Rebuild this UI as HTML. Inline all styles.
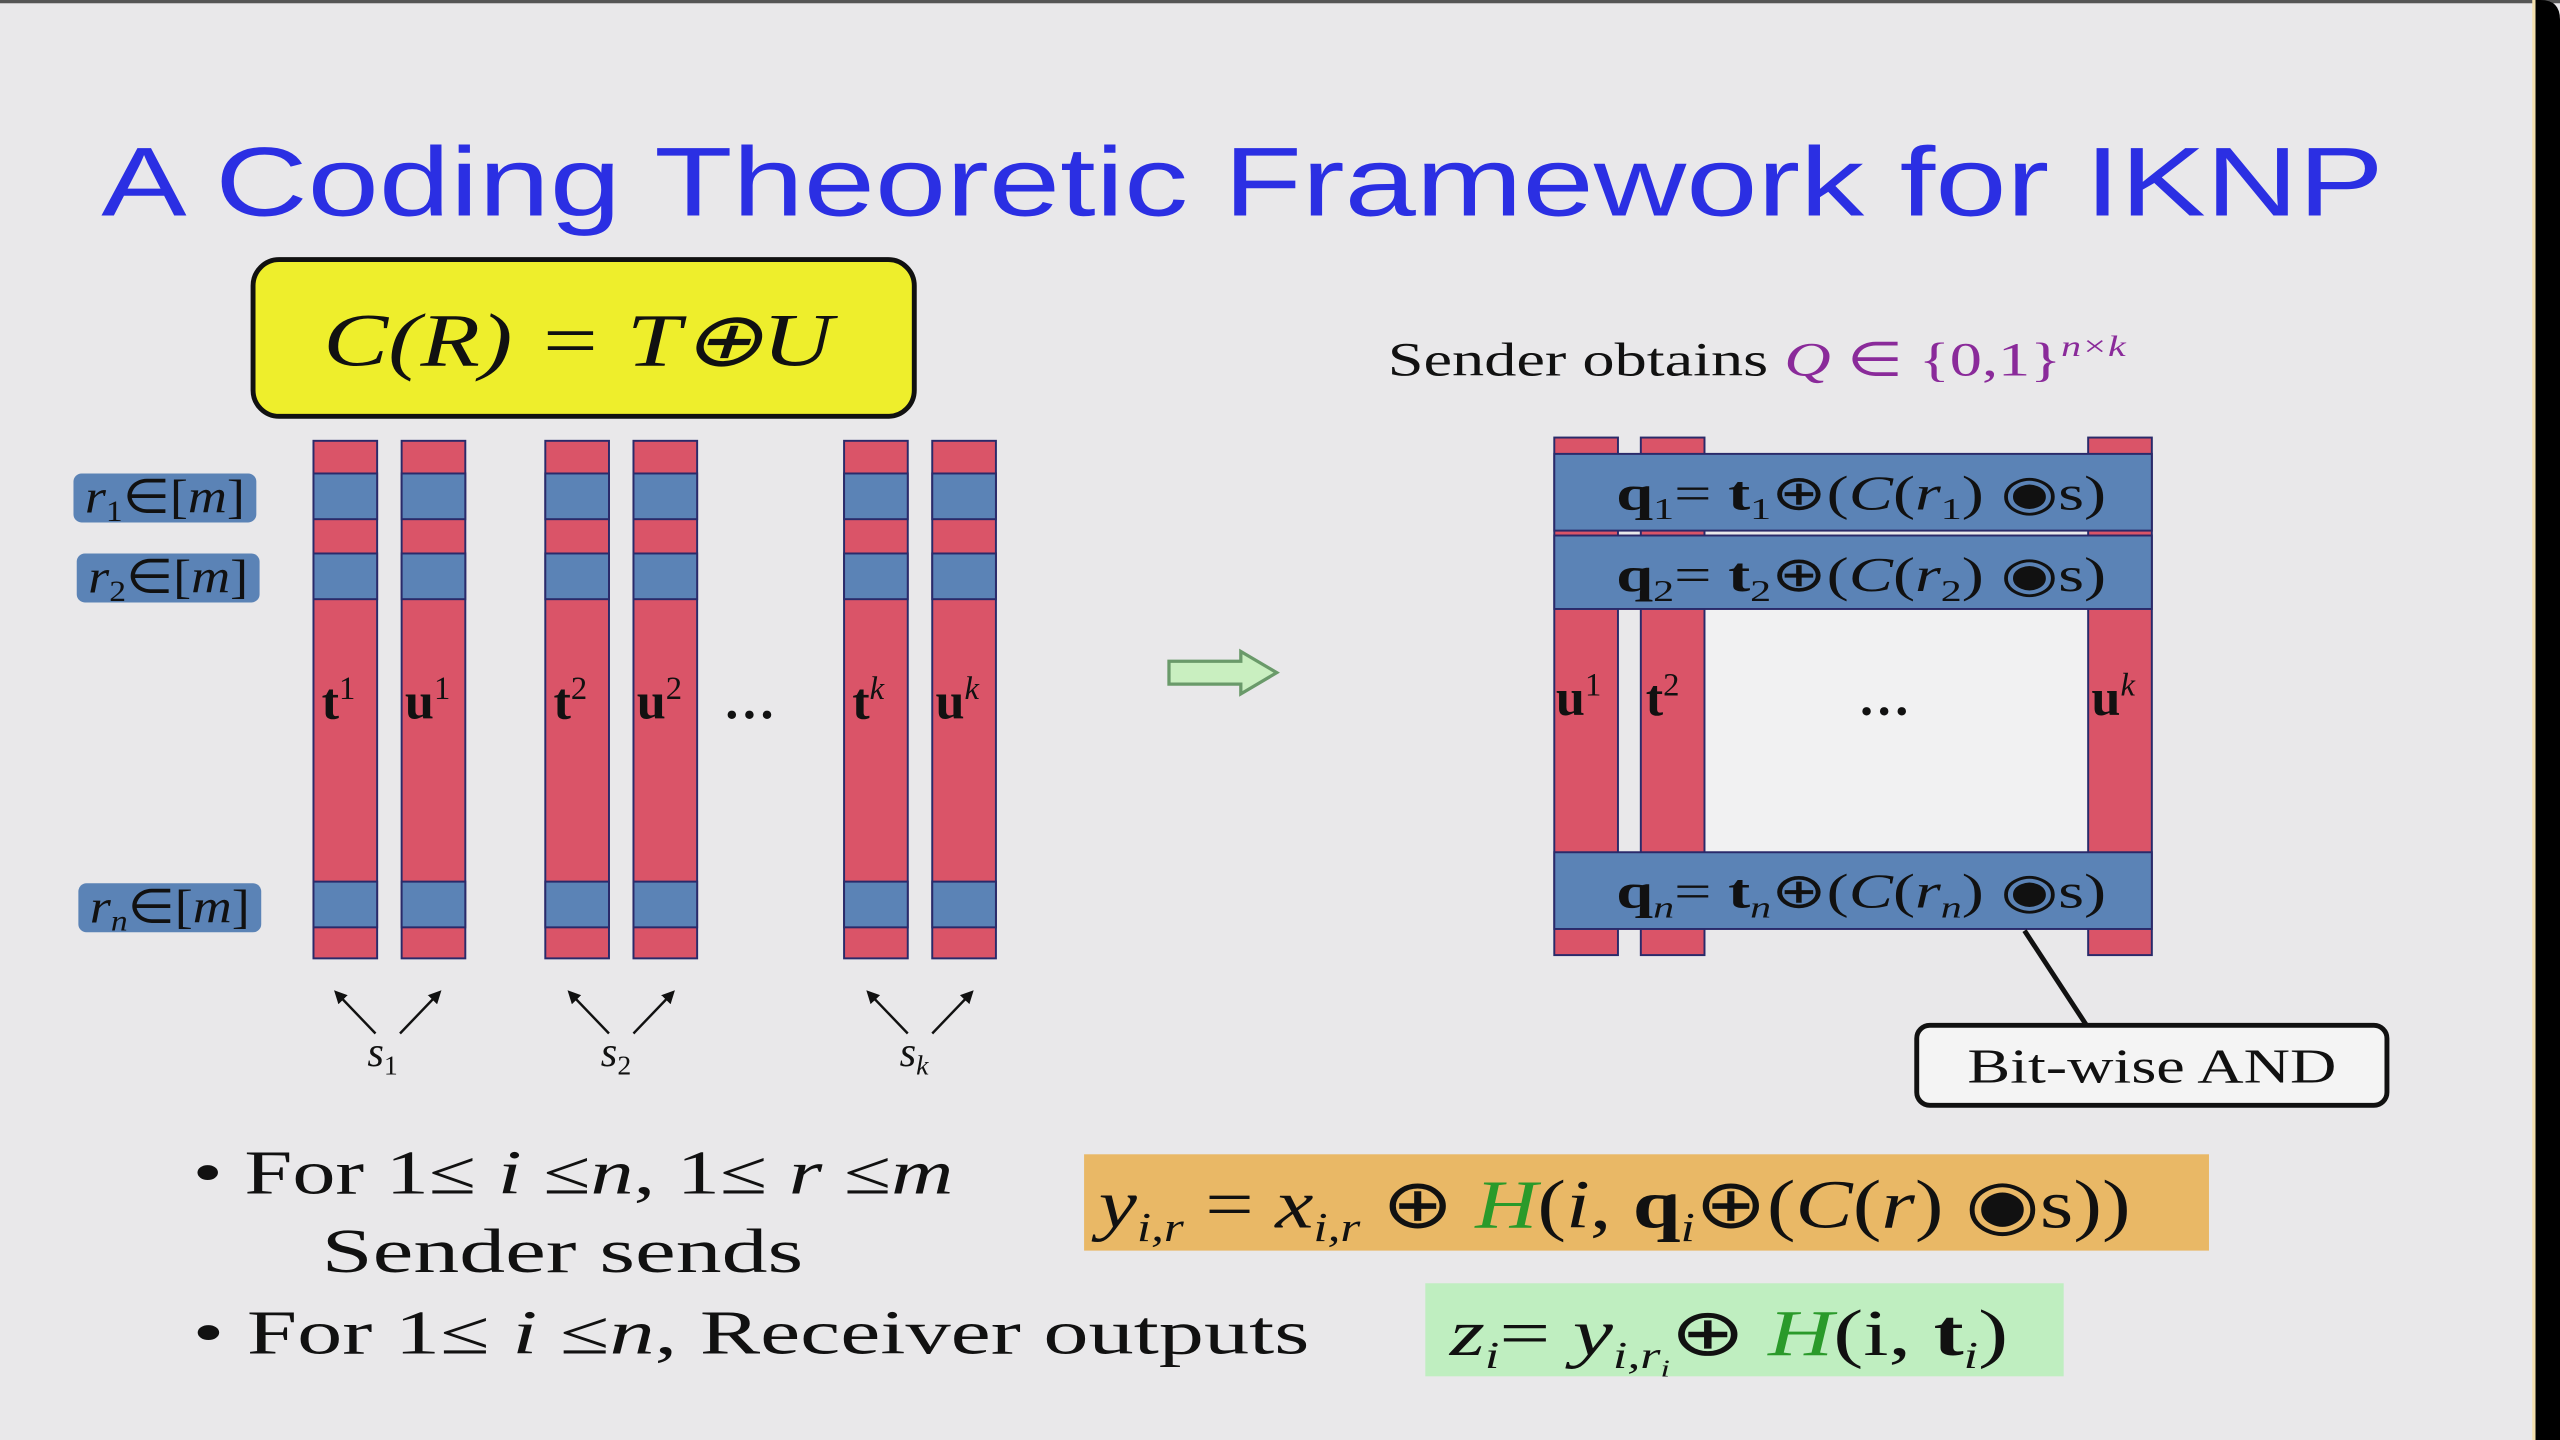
<!DOCTYPE html>
<html><head><meta charset="utf-8"><style>
html,body{margin:0;padding:0;background:#e9e8ea;}
svg{display:block;}
</style></head><body>
<svg width="2560" height="1440" viewBox="0 0 1568 882" xmlns="http://www.w3.org/2000/svg">
<defs>
<marker id="ah" markerWidth="8" markerHeight="8" refX="6" refY="4" orient="auto" markerUnits="userSpaceOnUse"><path d="M0,0 L8,4 L0,8 Z" fill="#111"/></marker>
<g id="col" stroke="#2a2a6a" stroke-width="1.2">
<rect x="0" y="270" width="39" height="317" fill="#da5468"/>
<rect x="0" y="290" width="39" height="28" fill="#5b83b6"/>
<rect x="0" y="339" width="39" height="28" fill="#5b83b6"/>
<rect x="0" y="540" width="39" height="28" fill="#5b83b6"/>
</g>
</defs>
<rect x="0" y="0" width="1568" height="882" fill="#e9e8ea"/>
<rect x="0" y="0" width="1568" height="2" fill="#555"/>
<rect x="1551" y="0" width="2" height="882" fill="#f2dfae"/>
<path d="M1553,0 H1556 Q1568,0 1568,12 V882 H1553 Z" fill="#000"/>

<text x="62" y="132" font-family="Liberation Sans, sans-serif" font-size="60" fill="#2b2fe3" textLength="1398" lengthAdjust="spacingAndGlyphs">A Coding Theoretic Framework for IKNP</text>

<rect x="155" y="159" width="405" height="96" rx="16" fill="#eeee2c" stroke="#111" stroke-width="3"/>
<text x="198" y="224" font-family="Liberation Serif, serif" font-style="italic" font-size="46" fill="#111" textLength="312" lengthAdjust="spacingAndGlyphs">C(R) = T⊕U</text>

<g font-family="Liberation Serif, serif" font-size="29" font-style="italic" fill="#111">
<rect x="45" y="290" width="112" height="30" rx="5" fill="#5b83b6"/>
<text x="52" y="314" textLength="98" lengthAdjust="spacingAndGlyphs">r<tspan font-size="18" dy="5" font-style="normal">1</tspan><tspan dy="-5" font-style="normal">∈[</tspan>m<tspan font-style="normal">]</tspan></text>
<rect x="47" y="339" width="112" height="30" rx="5" fill="#5b83b6"/>
<text x="54" y="363" textLength="98" lengthAdjust="spacingAndGlyphs">r<tspan font-size="18" dy="5" font-style="normal">2</tspan><tspan dy="-5" font-style="normal">∈[</tspan>m<tspan font-style="normal">]</tspan></text>
<rect x="48" y="541" width="112" height="30" rx="5" fill="#5b83b6"/>
<text x="55" y="565" textLength="98" lengthAdjust="spacingAndGlyphs">r<tspan font-size="18" dy="5">n</tspan><tspan dy="-5" font-style="normal">∈[</tspan>m<tspan font-style="normal">]</tspan></text>
</g>

<use href="#col" x="192"/><use href="#col" x="246"/><use href="#col" x="334"/><use href="#col" x="388"/><use href="#col" x="517"/><use href="#col" x="571"/>

<g font-family="Liberation Serif, serif" font-weight="bold" font-size="32" fill="#111">
<text x="197" y="440">t<tspan font-size="20" font-weight="normal" dy="-12">1</tspan></text>
<text x="248" y="440">u<tspan font-size="20" font-weight="normal" dy="-12">1</tspan></text>
<text x="339" y="440">t<tspan font-size="20" font-weight="normal" dy="-12">2</tspan></text>
<text x="390" y="440">u<tspan font-size="20" font-weight="normal" dy="-12">2</tspan></text>
<text x="443" y="440">…</text>
<text x="522" y="440">t<tspan font-size="20" font-weight="normal" font-style="italic" dy="-12">k</tspan></text>
<text x="573" y="440">u<tspan font-size="20" font-weight="normal" font-style="italic" dy="-12">k</tspan></text>
</g>

<g stroke="#111" stroke-width="1.5" fill="none" marker-end="url(#ah)">
<line x1="230" y1="633" x2="206" y2="608"/><line x1="245" y1="633" x2="269" y2="608"/>
<line x1="373" y1="633" x2="349" y2="608"/><line x1="388" y1="633" x2="412" y2="608"/>
<line x1="556" y1="633" x2="532" y2="608"/><line x1="571" y1="633" x2="595" y2="608"/>
</g>
<g font-family="Liberation Serif, serif" font-style="italic" font-size="26" fill="#111">
<text x="225" y="653">s<tspan font-size="17" font-style="normal" dy="5">1</tspan></text>
<text x="368" y="653">s<tspan font-size="17" font-style="normal" dy="5">2</tspan></text>
<text x="551" y="653">s<tspan font-size="17" dy="5">k</tspan></text>
</g>

<path d="M716,405 H760 V399 L782,412 L760,425 V419 H716 Z" fill="#c9efc0" stroke="#6a9a6a" stroke-width="2"/>

<text x="850" y="230" font-family="Liberation Serif, serif" font-size="29" fill="#111" textLength="452" lengthAdjust="spacingAndGlyphs">Sender obtains <tspan fill="#8a2a9a"><tspan font-style="italic">Q</tspan> ∈ {0,1}<tspan font-size="18" font-style="italic" dy="-12">n×k</tspan></tspan></text>

<rect x="1044" y="373" width="235" height="149" fill="#f1f1f2"/>
<g stroke="#2a2a6a" stroke-width="1.2">
<rect x="952" y="268" width="39" height="317" fill="#da5468"/>
<rect x="1005" y="268" width="39" height="317" fill="#da5468"/>
<rect x="1279" y="268" width="39" height="317" fill="#da5468"/>
<rect x="952" y="278" width="366" height="47" fill="#5b83b6"/>
<rect x="952" y="328" width="366" height="45" fill="#5b83b6"/>
<rect x="952" y="522" width="366" height="47" fill="#5b83b6"/>
</g>
<g font-family="Liberation Serif, serif" font-size="30" fill="#111">
<text x="990" y="312" textLength="300" lengthAdjust="spacingAndGlyphs"><tspan font-weight="bold">q</tspan><tspan font-size="19" dy="6">1</tspan><tspan dy="-6">= </tspan><tspan font-weight="bold">t</tspan><tspan font-size="19" dy="6">1</tspan><tspan dy="-6">⊕(</tspan><tspan font-style="italic">C</tspan>(<tspan font-style="italic">r</tspan><tspan font-size="19" dy="6">1</tspan><tspan dy="-6">) ◉s)</tspan></text>
<text x="990" y="362" textLength="300" lengthAdjust="spacingAndGlyphs"><tspan font-weight="bold">q</tspan><tspan font-size="19" dy="6">2</tspan><tspan dy="-6">= </tspan><tspan font-weight="bold">t</tspan><tspan font-size="19" dy="6">2</tspan><tspan dy="-6">⊕(</tspan><tspan font-style="italic">C</tspan>(<tspan font-style="italic">r</tspan><tspan font-size="19" dy="6">2</tspan><tspan dy="-6">) ◉s)</tspan></text>
<text x="990" y="556" textLength="300" lengthAdjust="spacingAndGlyphs"><tspan font-weight="bold">q</tspan><tspan font-size="19" font-style="italic" dy="6">n</tspan><tspan dy="-6">= </tspan><tspan font-weight="bold">t</tspan><tspan font-size="19" font-style="italic" dy="6">n</tspan><tspan dy="-6">⊕(</tspan><tspan font-style="italic">C</tspan>(<tspan font-style="italic">r</tspan><tspan font-size="19" font-style="italic" dy="6">n</tspan><tspan dy="-6">) ◉s)</tspan></text>
<g font-weight="bold" font-size="32">
<text x="953" y="438">u<tspan font-size="20" font-weight="normal" dy="-12">1</tspan></text>
<text x="1008" y="438">t<tspan font-size="20" font-weight="normal" dy="-12">2</tspan></text>
<text x="1138" y="438">…</text>
<text x="1281" y="438">u<tspan font-size="20" font-weight="normal" font-style="italic" dy="-12">k</tspan></text>
</g>
</g>

<line x1="1240" y1="570" x2="1278" y2="628" stroke="#111" stroke-width="3"/>
<rect x="1174" y="628" width="288" height="49" rx="8" fill="#f4f4f4" stroke="#111" stroke-width="3"/>
<text x="1205" y="663" font-family="Liberation Serif, serif" font-size="30" fill="#111" textLength="226" lengthAdjust="spacingAndGlyphs">Bit-wise AND</text>

<g font-family="Liberation Serif, serif" font-size="38" fill="#111">
<text x="118" y="731" textLength="466" lengthAdjust="spacingAndGlyphs">• For 1≤ <tspan font-style="italic">i</tspan> ≤<tspan font-style="italic">n</tspan>, 1≤ <tspan font-style="italic">r</tspan> ≤<tspan font-style="italic">m</tspan></text>
<text x="197" y="779" textLength="295" lengthAdjust="spacingAndGlyphs">Sender sends</text>
<text x="118" y="829" textLength="684" lengthAdjust="spacingAndGlyphs">• For 1≤ <tspan font-style="italic">i</tspan> ≤<tspan font-style="italic">n</tspan>,  Receiver outputs</text>
</g>

<rect x="664" y="707" width="689" height="59" fill="#e9b866"/>
<text x="673" y="752" font-family="Liberation Serif, serif" font-size="42" fill="#111" textLength="632" lengthAdjust="spacingAndGlyphs"><tspan font-style="italic">y</tspan><tspan font-size="25" font-style="italic" dy="8">i,r</tspan><tspan dy="-8"> = </tspan><tspan font-style="italic">x</tspan><tspan font-size="25" font-style="italic" dy="8">i,r</tspan><tspan dy="-8"> ⊕ </tspan><tspan font-style="italic" fill="#2a9a2a">H</tspan>(<tspan font-style="italic">i</tspan>, <tspan font-weight="bold">q</tspan><tspan font-size="25" font-style="italic" dy="8">i</tspan><tspan dy="-8">⊕(</tspan><tspan font-style="italic">C</tspan>(<tspan font-style="italic">r</tspan>) ◉s))</text>

<rect x="873" y="786" width="391" height="57" fill="#bfeec0"/>
<text x="888" y="830" font-family="Liberation Serif, serif" font-size="40" fill="#111" textLength="342" lengthAdjust="spacingAndGlyphs"><tspan font-style="italic">z</tspan><tspan font-size="23" font-style="italic" dy="8">i</tspan><tspan dy="-8">= </tspan><tspan font-style="italic">y</tspan><tspan font-size="23" font-style="italic" dy="8">i,r</tspan><tspan font-size="15" font-style="italic" dy="5">i</tspan><tspan dy="-13">⊕  </tspan><tspan font-style="italic" fill="#2a9a2a">H</tspan>(i, <tspan font-weight="bold">t</tspan><tspan font-size="23" font-style="italic" dy="8">i</tspan><tspan dy="-8">)</tspan></text>
</svg>
</body></html>
